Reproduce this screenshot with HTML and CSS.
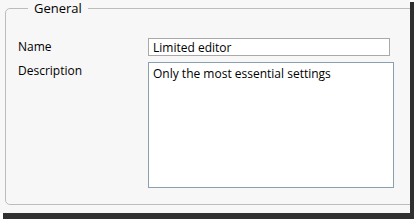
FILE: index.html
```html
<!DOCTYPE html>
<html>
  <head>
    <title>General</title>
    <link rel="stylesheet" href="styles.css">
  </head>
  <body>
    <div class="frame">
      <div class="window">
        <fieldset class="group">
          <legend>General</legend>
          <div class="row">
            <label for="name">Name</label>
            <input id="name" class="field" type="text" value="Limited editor">
          </div>
          <div class="row">
            <label for="desc">Description</label>
            <textarea id="desc" class="field area">Only the most essential settings</textarea>
          </div>
        </fieldset>
      </div>
    </div>
  </body>
</html>
```

FILE: styles.css
```css
html {
    background-color:#FFF;
    margin:0px;
    padding:0px;
}
body {
    margin:0px;
    padding:0px;
    font-family: "Open Sans", "DejaVu Sans", sans-serif;
    font-size:12px;
    color:#000;
}
.frame{
  width:414px;
  height:219px;
  padding:0px 4px 6px 0px;
  box-sizing: border-box;
  background-color:#303030;
  background-image:
    linear-gradient(#FFF, #FFF),
    linear-gradient(#FFF, #FFF);
  background-size: 4px 2px, 3px 6px;
  background-position: right top, left bottom;
  background-repeat: no-repeat;
}
.window{
  width:410px;
  height:213px;
  background-color:#f7f7f7;
  padding:0px 0px 0px 5px;
  box-sizing: border-box;
  overflow: hidden;
}
.group{
  margin:0px;
  padding:22px 0px 0px 12px;
  width:420px;
  height:205px;
  box-sizing: border-box;
  border:1px solid #bcbcbc;
  border-radius:5px;
}
.group legend{
  margin-left:10px;
  padding:0px 6px;
  font-size:13px;
  line-height:16px;
}
.row{
  display:flex;
  align-items:flex-start;
  margin-bottom:6px;
}
.row label{
  width:130px;
  line-height:17px;
}
.field{
  font-family: inherit;
  font-size:12px;
  margin:0px;
  padding:0px 4px;
  background:#FFF;
  border:1px solid #a9a9a9;
  box-sizing: border-box;
  width:242px;
  height:18px;
  outline:none;
}
.area{
  width:246px;
  height:126px;
  padding:3px 4px;
  border-color:#8aa0ac;
  resize:none;
  line-height:16px;
}
```
